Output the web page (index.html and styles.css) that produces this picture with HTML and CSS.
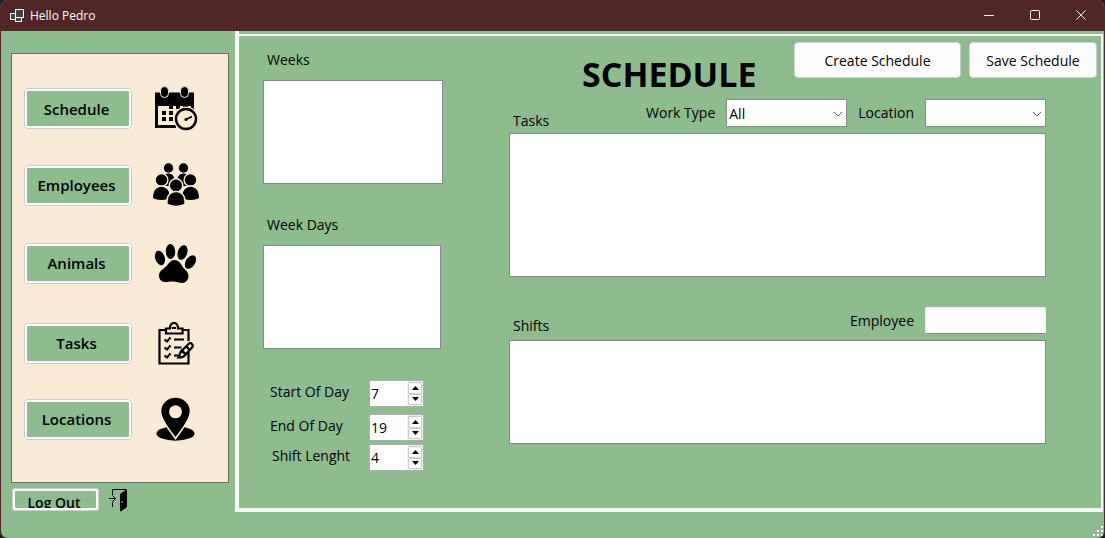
FILE: index.html
```html
<!DOCTYPE html>
<html lang="en">
<head>
<meta charset="utf-8">
<title>Hello Pedro</title>
<link rel="stylesheet" href="styles.css">
</head>
<body>
<div class="window">
  <header class="titlebar">
    <svg class="app-icon" width="16" height="16" viewBox="0 0 16 16" fill="#444" stroke="#fff" stroke-width="1" aria-hidden="true">
      <rect x="1.500" y="5.500" width="7" height="6"/><rect x="6.500" y="1.500" width="8" height="8"/><rect x="6.500" y="9.500" width="6" height="4"/>
    </svg>
    <span class="caption">Hello Pedro</span>
    <button class="winbtn" aria-label="Minimize"><svg width="12" height="12" viewBox="0 0 12 12"><path d="M1 5.500h10"/></svg></button>
    <button class="winbtn" aria-label="Maximize"><svg width="12" height="12" viewBox="0 0 12 12"><rect x="1.500" y=".5" width="9" height="9" rx="1"/></svg></button>
    <button class="winbtn" aria-label="Close"><svg width="12" height="12" viewBox="0 0 12 12"><path d="M1.500 .5l9 9M10.500 .5l-9 9"/></svg></button>
  </header>

  <div class="body">
    <aside class="sidebar">
      <nav class="menu">
        <div class="menu-row">
          <button class="nav-btn">Schedule</button>
          <svg width="48" height="48" viewBox="0 0 48 48" aria-hidden="true">
            <path d="M3 7.500h39v22H39V21H6v19h18v3H3z"/>
            <g stroke="#faebd7" stroke-width="1"><rect x="8.500" y="1.500" width="8" height="11" rx="4"/><rect x="28.500" y="1.500" width="8" height="11" rx="4"/></g>
            <path d="M17 20h4v4h-4zM24 20h4v4h-4zM31 20h5v3h-5zM10 26h4v4h-4zM17 26h4v4h-4zM24 26h4v4h-4zM10 32h4v4h-4zM17 32h4v4h-4z"/>
            <circle cx="34" cy="34" r="12.500" fill="#faebd7"/>
            <circle cx="34" cy="34" r="10" fill="#faebd7" stroke="#000" stroke-width="2.400"/>
            <path d="M34 34.500l6-3" stroke="#000" stroke-width="1.600"/><circle cx="34" cy="34.500" r="1.500"/>
          </svg>
        </div>
        <div class="menu-row">
          <button class="nav-btn">Employees</button>
          <svg width="48" height="48" viewBox="0 0 48 48" aria-hidden="true">
            <circle cx="16.500" cy="7" r="4.700"/><circle cx="31.500" cy="7" r="4.700"/>
            <path d="M9 22c0-6 3-9.500 7.500-9.500S23 16 23 22v3H12zM25 22c0-6 2-9.500 6.500-9.500S39 16 39 22v3H25z"/>
            <g stroke="#faebd7" stroke-width="1.400">
              <circle cx="9.500" cy="19" r="6.400"/><circle cx="38.500" cy="19" r="6.400"/>
              <path d="M.400 37.500V35c0-6 4-10 9-10s9 4 9 10v3c-5 2.500-13 2.500-18-.500zM29.600 38v-3c0-6 4-10 9-10s9 4 9 10v2.500c-5 3-13 3-18 .500z"/>
              <circle cx="24" cy="24.500" r="6.700"/>
              <path d="M15 43.500V40c0-6 4-9.500 9-9.500s9 3.500 9 9.500v3.500c-5 2.500-13 2.500-18 0z"/>
            </g>
          </svg>
        </div>
        <div class="menu-row">
          <button class="nav-btn">Animals</button>
          <svg width="48" height="48" viewBox="0 0 48 48" aria-hidden="true">
            <ellipse cx="8" cy="19" rx="4.700" ry="7.500" transform="rotate(-18 8 19)"/>
            <ellipse cx="18.500" cy="12.500" rx="4.700" ry="7.500" transform="rotate(-3 18.500 12.500)"/>
            <ellipse cx="30.500" cy="13.500" rx="4.700" ry="7.500" transform="rotate(18 30.500 13.500)"/>
            <ellipse cx="38.500" cy="23" rx="4.700" ry="7.500" transform="rotate(33 38.500 23)"/>
            <path d="M22.500 21c4 0 6 3 8 6.500 2 3.200 6 5 6 9.500 0 4-3 7-6.500 7-3 0-5-1.500-9-1.500-3.500 0-5 .500-8 .500-4 0-6-3-6-6.500 0-5 5-6.500 8-10 2-2.500 4-5.500 7.500-5.500z"/>
          </svg>
        </div>
        <div class="menu-row">
          <button class="nav-btn">Tasks</button>
          <svg width="48" height="48" viewBox="0 0 48 48" fill="none" stroke="#000" stroke-width="2.200" aria-hidden="true">
            <path d="M14 11H7.500V44.500h29V33M36.500 22V11H30"/>
            <path d="M14 14.500V9.500h4c0-7.500 8-7.500 8 0h4.500v5zM20 9h4"/>
            <path d="M12.500 20.500l2.500 2 3.500-4M12.500 28.500l2.500 2 3.500-4M12.500 36.500l2.500 2 3.500-4M22 20.500h10M22 28.500h7.500M22 36.500h4"/>
            <path d="M30 31.500l6.500-6.500c2.500-2.500 5.500 1 3.500 3.500L33.500 35.500z" fill="#faebd7"/>
            <path d="M30 31.500l3.500 4c-1 2.500-4 3-7 3 1.500-2 .500-5 3.500-7zM34.500 27.500l3 3.500"/>
          </svg>
        </div>
        <div class="menu-row">
          <button class="nav-btn">Locations</button>
          <svg width="48" height="48" viewBox="0 0 48 48" aria-hidden="true">
            <ellipse cx="23.500" cy="38.500" rx="19" ry="7.200"/>
            <path d="M23.500 2c8.500 0 15 6.500 15 14.500 0 9-10 19.500-15 27-5-7.500-15-18-15-27C8.500 8.500 15 2 23.500 2z" stroke="#faebd7" stroke-width="1.600"/>
            <circle cx="23.500" cy="16.800" r="6.500" fill="#faebd7"/>
          </svg>
        </div>
      </nav>
      <div class="logout">
        <button class="logout-btn">Log Out</button>
        <svg width="20" height="24" viewBox="0 0 20 24" fill="none" stroke="#000" aria-hidden="true">
          <path d="M3.500 7V1.500h14M3.500 14v5"/><path d="M0 10.500h6M3.500 7.500l3 3-3 3.500"/>
          <path d="M11.500 6l6-4v17l-6 4z" fill="#000"/><circle cx="13" cy="14" r=".7" fill="#fff" stroke="none"/>
        </svg>
      </div>
    </aside>

    <main class="panel">
      <div class="content">
        <section class="left">
          <label class="list-label" for="weeks">Weeks</label>
          <select class="list weeks" id="weeks" size="4"></select>
          <label class="list-label days-label" for="days">Week Days</label>
          <select class="list days" id="days" size="4"></select>
          <div class="settings">
            <label for="start">Start Of Day</label>
            <div class="spinner"><input id="start" type="number" value="7"><div class="steps"><button aria-label="Increase start of day"><svg width="7" height="4" viewBox="0 0 7 4"><path d="M0 4l3.500-4L7 4z"/></svg></button><button aria-label="Decrease start of day"><svg width="7" height="4" viewBox="0 0 7 4"><path d="M0 0l3.500 4L7 0z"/></svg></button></div></div>
            <label for="end">End Of Day</label>
            <div class="spinner"><input id="end" type="number" value="19"><div class="steps"><button aria-label="Increase end of day"><svg width="7" height="4" viewBox="0 0 7 4"><path d="M0 4l3.500-4L7 4z"/></svg></button><button aria-label="Decrease end of day"><svg width="7" height="4" viewBox="0 0 7 4"><path d="M0 0l3.500 4L7 0z"/></svg></button></div></div>
            <label class="length-label" for="length">Shift Lenght</label>
            <div class="spinner"><input id="length" type="number" value="4"><div class="steps"><button aria-label="Increase shift length"><svg width="7" height="4" viewBox="0 0 7 4"><path d="M0 4l3.500-4L7 4z"/></svg></button><button aria-label="Decrease shift length"><svg width="7" height="4" viewBox="0 0 7 4"><path d="M0 0l3.500 4L7 0z"/></svg></button></div></div>
          </div>
        </section>

        <section class="right">
          <div class="heading">
            <h1>SCHEDULE</h1>
            <button class="action create">Create Schedule</button>
            <button class="action save">Save Schedule</button>
          </div>
          <div class="lists">
            <div class="filters">
              <label class="name" for="tasks">Tasks</label>
              <label for="worktype">Work Type</label>
              <div class="combo combo-type"><select id="worktype"><option>All</option></select><svg width="10" height="6" viewBox="0 0 10 6"><path d="M1 1l4 4 4-4"/></svg></div>
              <label for="location">Location</label>
              <div class="combo"><select id="location"><option></option></select><svg width="10" height="6" viewBox="0 0 10 6"><path d="M1 1l4 4 4-4"/></svg></div>
            </div>
            <select class="list tasks" id="tasks" size="4"></select>
            <div class="filters employee-row">
              <label class="name" for="shifts">Shifts</label>
              <label for="employee">Employee</label>
              <input class="textbox" id="employee" type="text">
            </div>
            <select class="list shifts" id="shifts" size="4"></select>
          </div>
        </section>
      </div>
    </main>
  </div>

  <footer class="statusbar">
    <svg width="12" height="12" viewBox="0 0 12 12" aria-hidden="true">
      <path fill="#b5a9b0" d="M8 0h2v2H8zM4 4h2v2H4zM8 4h2v2H8zM0 8h2v2H0zM4 8h2v2H4zM8 8h2v2H8z"/>
      <path fill="#fff" d="M9 1h2v2H9zM5 5h2v2H5zM9 5h2v2H9zM1 9h2v2H1zM5 9h2v2H5zM9 9h2v2H9z"/>
    </svg>
  </footer>
</div>
</body>
</html>
```
FILE: styles.css
```css
* { box-sizing: border-box; }

body {
  margin: 0;
  background: #202020;
  color: #000;
  font: 14px/20px "Open Sans", "Noto Sans", sans-serif;
}

button, input, select { font: inherit; color: inherit; margin: 0; }
svg { display: block; flex: none; }

.window {
  display: flex;
  flex-direction: column;
  min-height: 100vh;
  border: 1px solid #502626;
  border-top: 0;
  border-radius: 8px;
  overflow: hidden;
  background: #8fbc8f;
}

/* Title bar */
.titlebar {
  display: flex;
  align-items: center;
  height: 31px;
  padding-left: 8px;
  background: #502626;
  color: #fff;
}
.caption { flex: 1; margin-left: 5px; font-size: 12px; }
.winbtn {
  display: grid;
  place-items: center;
  width: 46px;
  height: 31px;
  padding: 0;
  border: 0;
  background: none;
}
.winbtn svg { fill: none; stroke: #fff; }

.body { display: flex; flex: 1; }

/* Navigation */
.sidebar { width: 234px; padding: 22px 6px 0 10px; }
.menu {
  display: grid;
  grid-template-rows: 77px 76px 80px 80px 72px;
  padding: 16px 0 27px 12px;
  border: 1px solid #696969;
  background: #faebd7;
}
.menu-row { display: flex; align-items: center; gap: 20px; }
.nav-btn, .logout-btn {
  border: 3px solid #fff;
  border-radius: 4px;
  outline: 1px solid #ccc;
  outline-offset: -1px;
  background: #8fbc8f;
  padding: 0 3px 0 0;
  font-size: 15px;
  font-weight: 600;
}
.nav-btn { width: 108px; height: 41px; }
.logout { display: flex; gap: 10px; margin-top: 5px; }
.logout-btn {
  display: flex;
  justify-content: center;
  align-items: flex-start;
  width: 87px;
  height: 23px;
  margin-left: 1px;
  line-height: 24px;
  font-size: 14px;
  overflow: hidden;
}

/* Schedule panel */
.panel {
  flex: 1;
  display: flex;
  padding-top: 3px;
  border-left: 4px solid #f8f8f8;
}
.content {
  flex: 1;
  display: flex;
  gap: 66px;
  margin-right: 1px;
  padding-left: 24px;
  border: solid #f8f8f8;
  border-width: 2px 2px 4px 0;
}
.list {
  display: block;
  width: 100%;
  border: 1px solid #828790;
  border-radius: 0;
  background: #fff;
  padding: 0;
}

.left { width: 180px; padding-top: 14px; }
.list-label { display: block; margin: 0 0 10px 4px; }
.weeks, .days { height: 104px; }
.days { width: 178px; }
.days-label { margin-top: 31px; }
.settings {
  display: grid;
  grid-template-columns: 99px 55px;
  grid-template-rows: 34px 30px 27px;
  align-items: start;
  margin: 31px 0 0 7px;
  line-height: 24px;
}
.length-label { margin-left: 2px; }
.spinner {
  display: flex;
  height: 27px;
  border: 1px solid #abadb3;
  background: #fff;
}
.spinner input {
  flex: 1;
  min-width: 0;
  padding: 0 0 0 1px;
  border: 0;
  background: none;
  appearance: textfield;
}
.spinner input::-webkit-inner-spin-button { appearance: none; }
.steps { display: flex; flex-direction: column; width: 16px; padding: 1px; background: #f0f0f0; }
.steps button {
  flex: 1;
  display: grid;
  place-items: center;
  padding: 0;
  border: 1px solid #ccc;
  border-radius: 1px;
  background: #fdfdfd;
}

.right { flex: 1; padding: 6px 4px 32px 0; }
.heading { display: flex; justify-content: flex-end; align-items: flex-start; gap: 8px; height: 57px; }
h1 {
  flex: 1;
  margin: 0;
  padding: 8px 0 0 73px;
  font-size: 34px;
  line-height: 48px;
  font-weight: 700;
}
.action {
  height: 36px;
  padding: 2px 0 0;
  border: 1px solid #d0d0d0;
  border-radius: 4px;
  background: #fdfdfd;
}
.create { width: 167px; }
.save { width: 128px; }

.lists { margin-right: 51px; }
.filters { display: flex; align-items: flex-start; height: 34px; padding-left: 4px; line-height: 28px; }
.filters .name { flex: 1; padding-top: 8px; }
.combo { position: relative; width: 121px; margin-left: 11px; }
.combo-type { margin-right: 11px; }
.combo select {
  display: block;
  width: 100%;
  height: 28px;
  padding: 0 2px;
  border: 1px solid #8a8a8a;
  border-radius: 0;
  background: #fff;
  appearance: none;
}
.combo svg {
  position: absolute;
  right: 4px;
  top: 12px;
  fill: none;
  stroke: #606060;
  pointer-events: none;
}
.tasks { height: 144px; }
.employee-row { margin-top: 29px; padding-top: 1px; }
.employee-row .name { padding-top: 5px; }
.textbox {
  width: 121px;
  height: 27px;
  margin-left: 11px;
  padding: 0 3px;
  border: 1px solid #ececec;
  border-bottom-color: #868686;
  border-radius: 2px;
}
.shifts { height: 104px; }

.statusbar { display: flex; justify-content: flex-end; align-items: flex-end; height: 26px; padding: 0 0 1px; }
```
